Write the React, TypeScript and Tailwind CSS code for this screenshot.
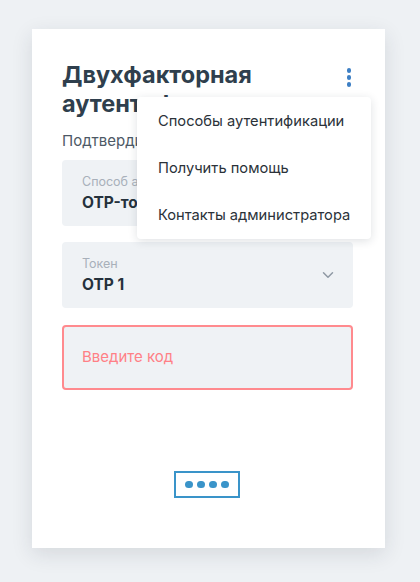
import { ChevronDown } from "lucide-react"

const menuItems = ["Способы аутентификации", "Получить помощь", "Контакты администратора"]

function Field({ label, value, chevron }: { label: string; value: string; chevron?: boolean }) {
  return (
    <div className="flex h-[66px] items-center justify-between rounded-[4px] bg-[#eff2f5] pl-5 pr-4">
      <div className="flex flex-col pt-[1px]">
        <span className="text-[12.5px] leading-[16px] text-[#a8b0ba]">{label}</span>
        <span className="mt-[3px] text-[15.5px] font-bold leading-[20px] text-[#25313c]">{value}</span>
      </div>
      {chevron && <ChevronDown className="h-[18px] w-[18px] text-[#8f99a4]" strokeWidth={2} />}
    </div>
  )
}

export default function App() {
  return (
    <div
      className="min-h-[582px] bg-[#eef1f4] pt-[29px] pl-[32px]"
      style={{ fontFamily: "Inter, 'Noto Sans', sans-serif" }}
    >
      <div className="relative flex h-[519px] w-[353px] flex-col bg-white pt-[31px] pl-[30px] pr-[32px] shadow-[0_6px_20px_rgba(30,45,60,0.12)]">
        <div className="flex items-start justify-between">
          <h1 className="text-[23.5px] font-bold leading-[29px] text-[#2f3f4d]">
            Двухфакторная
            <br />
            аутентификация
          </h1>
          <div className="mr-[2px] mt-[8px] flex flex-col gap-[2.5px]">
            <span className="h-[4.5px] w-[4.5px] rounded-full bg-[#3d7fc4]" />
            <span className="h-[4.5px] w-[4.5px] rounded-full bg-[#3d7fc4]" />
            <span className="h-[4.5px] w-[4.5px] rounded-full bg-[#3d7fc4]" />
          </div>
        </div>

        <p className="mt-[13px] text-[15px] leading-[20px] text-[#4d5966]">Подтвердите свою личность</p>

        <div className="mt-[9px] flex flex-col gap-[16px]">
          <Field label="Способ аутентификации" value="OTP-токен" chevron />
          <Field label="Токен" value="OTP 1" chevron />
          <div className="mt-[1px] flex h-[65px] items-center rounded-[4px] border-2 border-[#ff8a8e] bg-[#eff2f5] px-[18px]">
            <span className="text-[15px] text-[#ff8086]">Введите код</span>
          </div>
        </div>

        <div className="mt-[81px] flex justify-center pr-[1px]">
          <div className="flex h-[27px] w-[66px] items-center justify-center gap-[4.5px] border-2 border-[#3a94c9]">
            <span className="h-[7.5px] w-[7.5px] rounded-full bg-[#3a94c9]" />
            <span className="h-[7.5px] w-[7.5px] rounded-full bg-[#3a94c9]" />
            <span className="h-[7.5px] w-[7.5px] rounded-full bg-[#3a94c9]" />
            <span className="h-[7.5px] w-[7.5px] rounded-full bg-[#3a94c9]" />
          </div>
        </div>

        <div className="absolute left-[105px] top-[68px] flex h-[142px] w-[234px] flex-col justify-center rounded-[4px] bg-white shadow-[0_2px_10px_rgba(30,45,60,0.14)]">
          {menuItems.map((item) => (
            <div key={item} className="flex h-[47px] items-center pl-[21px] text-[14.7px] text-[#2b3239]">
              {item}
            </div>
          ))}
        </div>
      </div>
    </div>
  )
}
